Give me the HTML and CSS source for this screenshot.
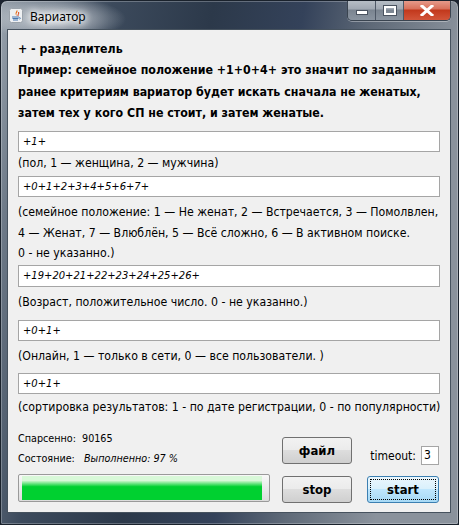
FILE: index.html
```html
<!DOCTYPE html>
<html lang="ru">
<head>
<meta charset="utf-8">
<title>Вариатор</title>
<link rel="stylesheet" href="styles.css">
</head>
<body>
<div class="window">
  <div class="titlebar">
    <div class="app-icon">
      <svg width="14" height="15" viewBox="0 0 14 15">
        <rect x="0.5" y="0.5" width="13" height="14" rx="2" fill="#eef0f2" stroke="#9aa2aa"/>
        <path d="M8 2 C10 4 6 5 8 8 C6 7 6 5 8 2 Z" fill="#e8731c"/>
        <path d="M9.5 4 C10.5 5.5 8.5 6.5 9 8" stroke="#d9431a" stroke-width="1" fill="none"/>
        <path d="M3 9 H10 M3.5 10.5 H9.5 M4 12 H9" stroke="#4a78b0" stroke-width="1"/>
        <path d="M10 9.5 C12 9.5 12 11 10 11" stroke="#4a78b0" stroke-width="0.8" fill="none"/>
      </svg>
    </div>
    <div class="title">Вариатор</div>
    <div class="caption-buttons">
      <div class="cbtn cmin"><span class="min-bar"></span></div>
      <div class="cbtn cmax"><span class="max-box"></span></div>
      <div class="cbtn cclose">
        <svg width="14" height="11" viewBox="0 0 14 11"><path d="M2 1 L12 10 M12 1 L2 10" stroke="#fff" stroke-width="3" stroke-linecap="square"/></svg>
      </div>
    </div>
  </div>
  <div class="client">
    <div class="info">+ - разделитель<br>Пример: семейное положение +1+0+4+ это значит по заданным<br>ранее критериям вариатор будет искать сначала не женатых,<br>затем тех у кого СП не стоит, и затем женатые.</div>

    <div class="field f1">+1+</div>
    <div class="hint h1">(пол, 1 — женщина, 2 — мужчина)</div>

    <div class="field f2">+0+1+2+3+4+5+6+7+</div>
    <div class="hint h2">(семейное положение: 1 — Не женат, 2 — Встречается, 3 — Помолвлен,<br>4 — Женат, 7 — Влюблён, 5 — Всё сложно, 6 — В активном поиске.<br>0 - не указанно.)</div>

    <div class="field f3">+19+20+21+22+23+24+25+26+</div>
    <div class="hint h3">(Возраст, положительное число. 0 - не указанно.)</div>

    <div class="field f4">+0+1+</div>
    <div class="hint h4">(Онлайн, 1 — только в сети, 0 — все пользователи. )</div>

    <div class="field f5">+0+1+</div>
    <div class="hint h5">(сортировка результатов: 1 - по дате регистрации, 0 - по популярности)</div>

    <div class="bottom">
      <div class="status-col">
        <div class="stat">Спарсенно:&nbsp; 90165</div>
        <div class="stat">Состояние:&nbsp;&nbsp; <i>Выполненно: 97 %</i></div>
        <div class="progress"><div class="progress-fill"></div></div>
      </div>
      <div class="btn-col">
        <div class="btn btn-file">файл</div>
        <div class="btn btn-stop">stop</div>
      </div>
      <div class="right-col">
        <div class="timeout-row"><span class="timeout-label">timeout:</span><span class="timeout-input">3</span></div>
        <div class="btn btn-start"><span class="focus">start</span></div>
      </div>
    </div>
  </div>
</div>
</body>
</html>
```

FILE: styles.css
```css
html, body {
  margin: 0;
  padding: 0;
  background: #1c2430;
}

.window {
  width: 459px;
  height: 525px;
  box-sizing: border-box;
  border: 1px solid #1a222c;
  border-radius: 7px 7px 2px 2px;
  background:
    radial-gradient(ellipse 70px 22px at 55px 18px, rgba(230,234,238,0.85), rgba(230,234,238,0) 100%),
    linear-gradient(100deg, #9aa4ae 0px, #6e7a88 40px, #3c4a5c 110px, #2c394a 210px, #34425a 300px, #5f6a78 370px, #8a929c 459px);
  display: flex;
  flex-direction: column;
  overflow: hidden;
  box-shadow: inset 0 0 0 1px rgba(255,255,255,0.25);
}

.titlebar {
  height: 28px;
  display: flex;
  align-items: flex-start;
  position: relative;
}

.app-icon {
  margin: 7px 0 0 8px;
  width: 14px;
  height: 15px;
}

.title {
  margin: 8px 0 0 7px;
  font-family: "Noto Sans", "Open Sans", sans-serif;
  font-size: 12px;
  line-height: 16px;
  color: #000;
  text-shadow: 0 0 6px #fff, 0 0 8px #fff, 0 0 10px #fff;
}

.caption-buttons {
  position: absolute;
  top: -1px;
  right: 7px;
  display: flex;
  height: 20px;
  border: 1px solid #3a4450;
  border-top: none;
  border-radius: 0 0 5px 5px;
  overflow: hidden;
  box-shadow: 0 1px 0 rgba(255,255,255,0.35);
}

.cbtn {
  height: 20px;
  display: flex;
  align-items: center;
  justify-content: center;
}

.cmin, .cmax {
  width: 27px;
  background: linear-gradient(#b9c0c8 0%, #a0a8b2 45%, #7a8490 50%, #8a94a0 100%);
  border-right: 1px solid #4e5866;
}

.min-bar {
  width: 10px;
  height: 3px;
  background: #fff;
  border: 1px solid #4a5360;
  margin-top: 5px;
}

.max-box {
  width: 8px;
  height: 5px;
  border: 2px solid #fff;
  outline: 1px solid #4a5360;
}

.cclose {
  width: 46px;
  background: linear-gradient(#e8a090 0%, #d8705a 45%, #c2381c 50%, #d2553a 100%);
}

.client {
  flex: 1;
  margin: 0 7px 11px 6px;
  border: 1px solid #46525e;
  background: #f0f0f0;
  display: flex;
  flex-direction: column;
  padding: 0 9px 0 10px;
  font-family: "DejaVu Sans Condensed", "DejaVu Sans", sans-serif;
  color: #000;
}

.info {
  margin-top: 9px;
  font-weight: bold;
  font-size: 12.3px;
  line-height: 21.3px;
  white-space: nowrap;
}

.field {
  height: 21px;
  box-sizing: border-box;
  border: 1px solid #a5a5a5;
  background: #fff;
  font-style: italic;
  font-size: 11.1px;
  line-height: 19px;
  padding-left: 4px;
  width: 422px;
}

.hint {
  font-size: 12.2px;
  line-height: 20px;
  white-space: nowrap;
}

.f1 { margin-top: 7px; }
.h1 { margin-top: 1px; }
.f2 { margin-top: 3px; }
.h2 { margin-top: 5px; line-height: 20.5px; }
.f3 { margin-top: 1.5px; height: 22px; }
.h3 { margin-top: 5px; }
.f4 { margin-top: 7.5px; }
.h4 { margin-top: 5px; }
.f5 { margin-top: 7px; }
.h5 { margin-top: 3.5px; }

.bottom {
  margin-top: 12px;
  display: flex;
  align-items: flex-start;
}

.status-col {
  width: 252px;
  display: flex;
  flex-direction: column;
}

.stat {
  font-size: 10.7px;
  line-height: 20px;
  white-space: nowrap;
}

.progress {
  margin-top: 5px;
  height: 28px;
  box-sizing: border-box;
  border: 1px solid #9a9a9a;
  border-radius: 2px;
  background: linear-gradient(#f8f8f8, #dcdcdc);
  padding: 6px 7px 1px 3px;
}

.progress-fill {
  height: 100%;
  background: linear-gradient(#c6f5c8 0%, #00d030 30%, #00d030 100%);
  box-shadow: 0 -5px 0 #d8f8d8;
}

.btn-col {
  margin-left: 12px;
  width: 70px;
  display: flex;
  flex-direction: column;
}

.btn {
  height: 27px;
  box-sizing: border-box;
  border: 1px solid #707070;
  border-radius: 3px;
  background: linear-gradient(#f2f2f2 0%, #ebebeb 49%, #dddddd 50%, #cfcfcf 100%);
  font-weight: bold;
  font-size: 13px;
  display: flex;
  align-items: center;
  justify-content: center;
  color: #000;
}

.btn-file { margin-top: 8px; }
.btn-stop { margin-top: 12px; }

.right-col {
  margin-left: 15px;
  width: 72px;
  display: flex;
  flex-direction: column;
}

.timeout-row {
  margin-top: 17px;
  height: 19px;
  display: flex;
  align-items: center;
  justify-content: flex-end;
}

.timeout-label {
  font-size: 12px;
  margin-right: 5px;
}

.timeout-input {
  width: 18px;
  height: 19px;
  box-sizing: border-box;
  border: 1px solid #a5a5a5;
  background: #fff;
  font-size: 12px;
  line-height: 17px;
  padding-left: 2px;
}

.btn-start {
  margin-top: 11px;
  border-color: #3c7fb1;
  background: linear-gradient(#eaf6fd 0%, #d9f0fc 49%, #bee6fd 50%, #a7d9f5 100%);
  padding: 2px;
}

.focus {
  flex: 1;
  height: 100%;
  box-sizing: border-box;
  border: 1px dotted #000;
  display: flex;
  align-items: center;
  justify-content: center;
}
```
